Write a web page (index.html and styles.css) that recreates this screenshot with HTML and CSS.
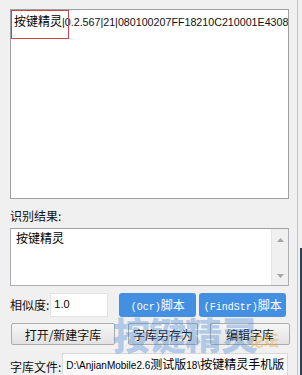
FILE: index.html
```html
<!DOCTYPE html>
<html>
<head>
<meta charset="utf-8">
<link rel="stylesheet" href="styles.css">
</head>
<body>
<div class="win">
  <div class="log">
    <div class="sel"></div>
    <div class="logline"><span class="cn">按键精灵</span><span class="lat">|0.2.567|21|080100207FF18210C210001E4308C</span></div>
  </div>
  <div class="label lbl-result">识别结果:</div>
  <div class="result">
    <div class="result-text">按键精灵</div>
    <div class="scroll">
      <svg class="arr" width="7" height="4" viewBox="0 0 7 4"><path d="M0 4 L3.5 0 L7 4 Z" fill="#a6a6a6"/></svg>
      <svg class="arr" width="7" height="4" viewBox="0 0 7 4"><path d="M0 0 L3.5 4 L7 0 Z" fill="#a6a6a6"/></svg>
    </div>
  </div>
  <div class="row row-sim">
    <div class="label">相似度:</div>
    <div class="input sim">1.0</div>
    <button class="blue b-ocr"><span class="mono">(Ocr)</span>脚本</button>
    <button class="blue b-find"><span class="mono">(FindStr)</span>脚本</button>
  </div>
  <div class="row row-lib">
    <button class="btn b-open">打开/新建字库</button>
    <button class="btn b-save">字库另存为</button>
    <button class="btn b-edit">编辑字库</button>
  </div>
  <div class="row row-file">
    <div class="label">字库文件:</div>
    <div class="input path"><span class="lat10">D:\AnjianMobile2.6</span>测试版<span class="lat10">18\</span>按键精灵手机版</div>
  </div>
  <div class="watermark"><span class="wm-main">按键精灵</span><span class="wm-sub">论坛</span></div>
  <div class="edge"></div>
  <div class="edge2"></div>
</div>
</body>
</html>
```
FILE: styles.css
```css
html, body {
  margin: 0;
  padding: 0;
}
body {
  background: #f0f0f0;
  font-family: "Noto Sans CJK SC", "Liberation Sans", sans-serif;
  font-size: 12px;
  color: #000;
  width: 302px;
  height: 375px;
  overflow: hidden;
}
.win {
  position: relative;
  width: 302px;
  height: 375px;
  padding: 9px 0 0 10px;
  box-sizing: border-box;
}
.log {
  position: relative;
  width: 279px;
  height: 190px;
  background: #fff;
  border: 1px solid #a0a0a0;
  box-sizing: border-box;
  overflow: hidden;
}
.sel {
  position: absolute;
  left: 0;
  top: 0;
  width: 58px;
  height: 29px;
  border: 1px solid #c8454a;
  box-sizing: border-box;
}
.logline {
  white-space: nowrap;
  padding: 3px 0 0 3px;
  line-height: 16px;
  display: flex;
  align-items: baseline;
}
.cn {
  font-size: 12px;
}
.lat {
  font-family: "Liberation Sans", sans-serif;
  font-size: 10.7px;
  color: #111;
}
.label {
  font-size: 12px;
  line-height: 14px;
  color: #111;
}
.lbl-result {
  margin-top: 10px;
}
.result {
  margin-top: 5px;
  width: 279px;
  height: 58px;
  background: #fff;
  border: 1px solid #abadb3;
  border-top-color: #a0a0a0;
  box-sizing: border-box;
  display: flex;
}
.result-text {
  flex: 1;
  padding: 1px 0 0 5px;
  line-height: 16px;
}
.scroll {
  width: 17px;
  background: #f0f0f0;
  border-left: 1px solid #e6e6e6;
  display: flex;
  flex-direction: column;
  align-items: center;
  justify-content: space-between;
  padding: 9px 0 7px;
  box-sizing: border-box;
}
.row {
  display: flex;
  align-items: center;
}
.row-sim {
  margin-top: 7px;
  height: 24px;
}
.input {
  background: #fff;
  border: 1px solid #e3e3e3;
  box-sizing: border-box;
  font-family: "Liberation Sans", sans-serif;
  font-size: 11px;
  white-space: nowrap;
  overflow: hidden;
}
.sim {
  margin-left: 1px;
  width: 58px;
  height: 24px;
  padding: 4px 0 0 3px;
}
button {
  font-family: "Noto Sans CJK SC", "Liberation Sans", sans-serif;
  font-size: 12px;
  padding: 0;
  margin: 0;
  cursor: default;
}
.blue {
  height: 24px;
  background: #4390e3;
  color: #fff;
  border: none;
  border-radius: 3px;
  line-height: 24px;
}
.mono {
  font-family: "Liberation Mono", monospace;
  font-size: 10px;
}
.b-ocr {
  margin-left: 11px;
  width: 77px;
}
.b-find {
  margin-left: 3px;
  width: 87px;
}
.row-lib {
  margin-top: 6px;
  height: 22px;
}
.btn {
  height: 22px;
  border: 1px solid #adadad;
  border-radius: 2px;
  background: linear-gradient(#f6f6f6, #e2e2e2);
  color: #111;
}
.b-open {
  margin-left: 1px;
  width: 104px;
}
.b-save {
  margin-left: 13px;
  width: 70px;
}
.b-edit {
  margin-left: 12px;
  width: 80px;
}
.row-file {
  margin-top: 8px;
  align-items: flex-start;
}
.row-file .label {
  margin-top: 7px;
}
.path {
  margin-left: 1px;
  width: 226px;
  height: 30px;
  padding: 2px 0 0 3px;
  border-color: #d9d9d9;
  background: #fafafa;
  font-family: "Noto Sans CJK SC", sans-serif;
  font-size: 12px;
  line-height: 16px;
}
.lat10 {
  font-family: "Liberation Sans", sans-serif;
  font-size: 10px;
}
.watermark {
  position: absolute;
  left: 113px;
  top: 313px;
  display: flex;
  align-items: flex-end;
  pointer-events: none;
}
.wm-main {
  font-family: "Noto Sans CJK SC", sans-serif;
  font-weight: 900;
  font-size: 37px;
  line-height: 42px;
  letter-spacing: -1px;
  color: rgba(60, 130, 210, 0.36);
}
.wm-sub {
  font-family: "Noto Sans CJK SC", sans-serif;
  font-weight: 700;
  font-size: 15px;
  line-height: 18px;
  margin-left: -8px;
  margin-bottom: 6px;
  color: rgba(240, 160, 40, 0.42);
}
.edge {
  position: absolute;
  left: 297px;
  top: 0;
  width: 1px;
  height: 375px;
  background: #c4c4c4;
}
.edge2 {
  position: absolute;
  left: 300px;
  top: 248px;
  width: 2px;
  height: 127px;
  background: #2a3f5a;
}
```
